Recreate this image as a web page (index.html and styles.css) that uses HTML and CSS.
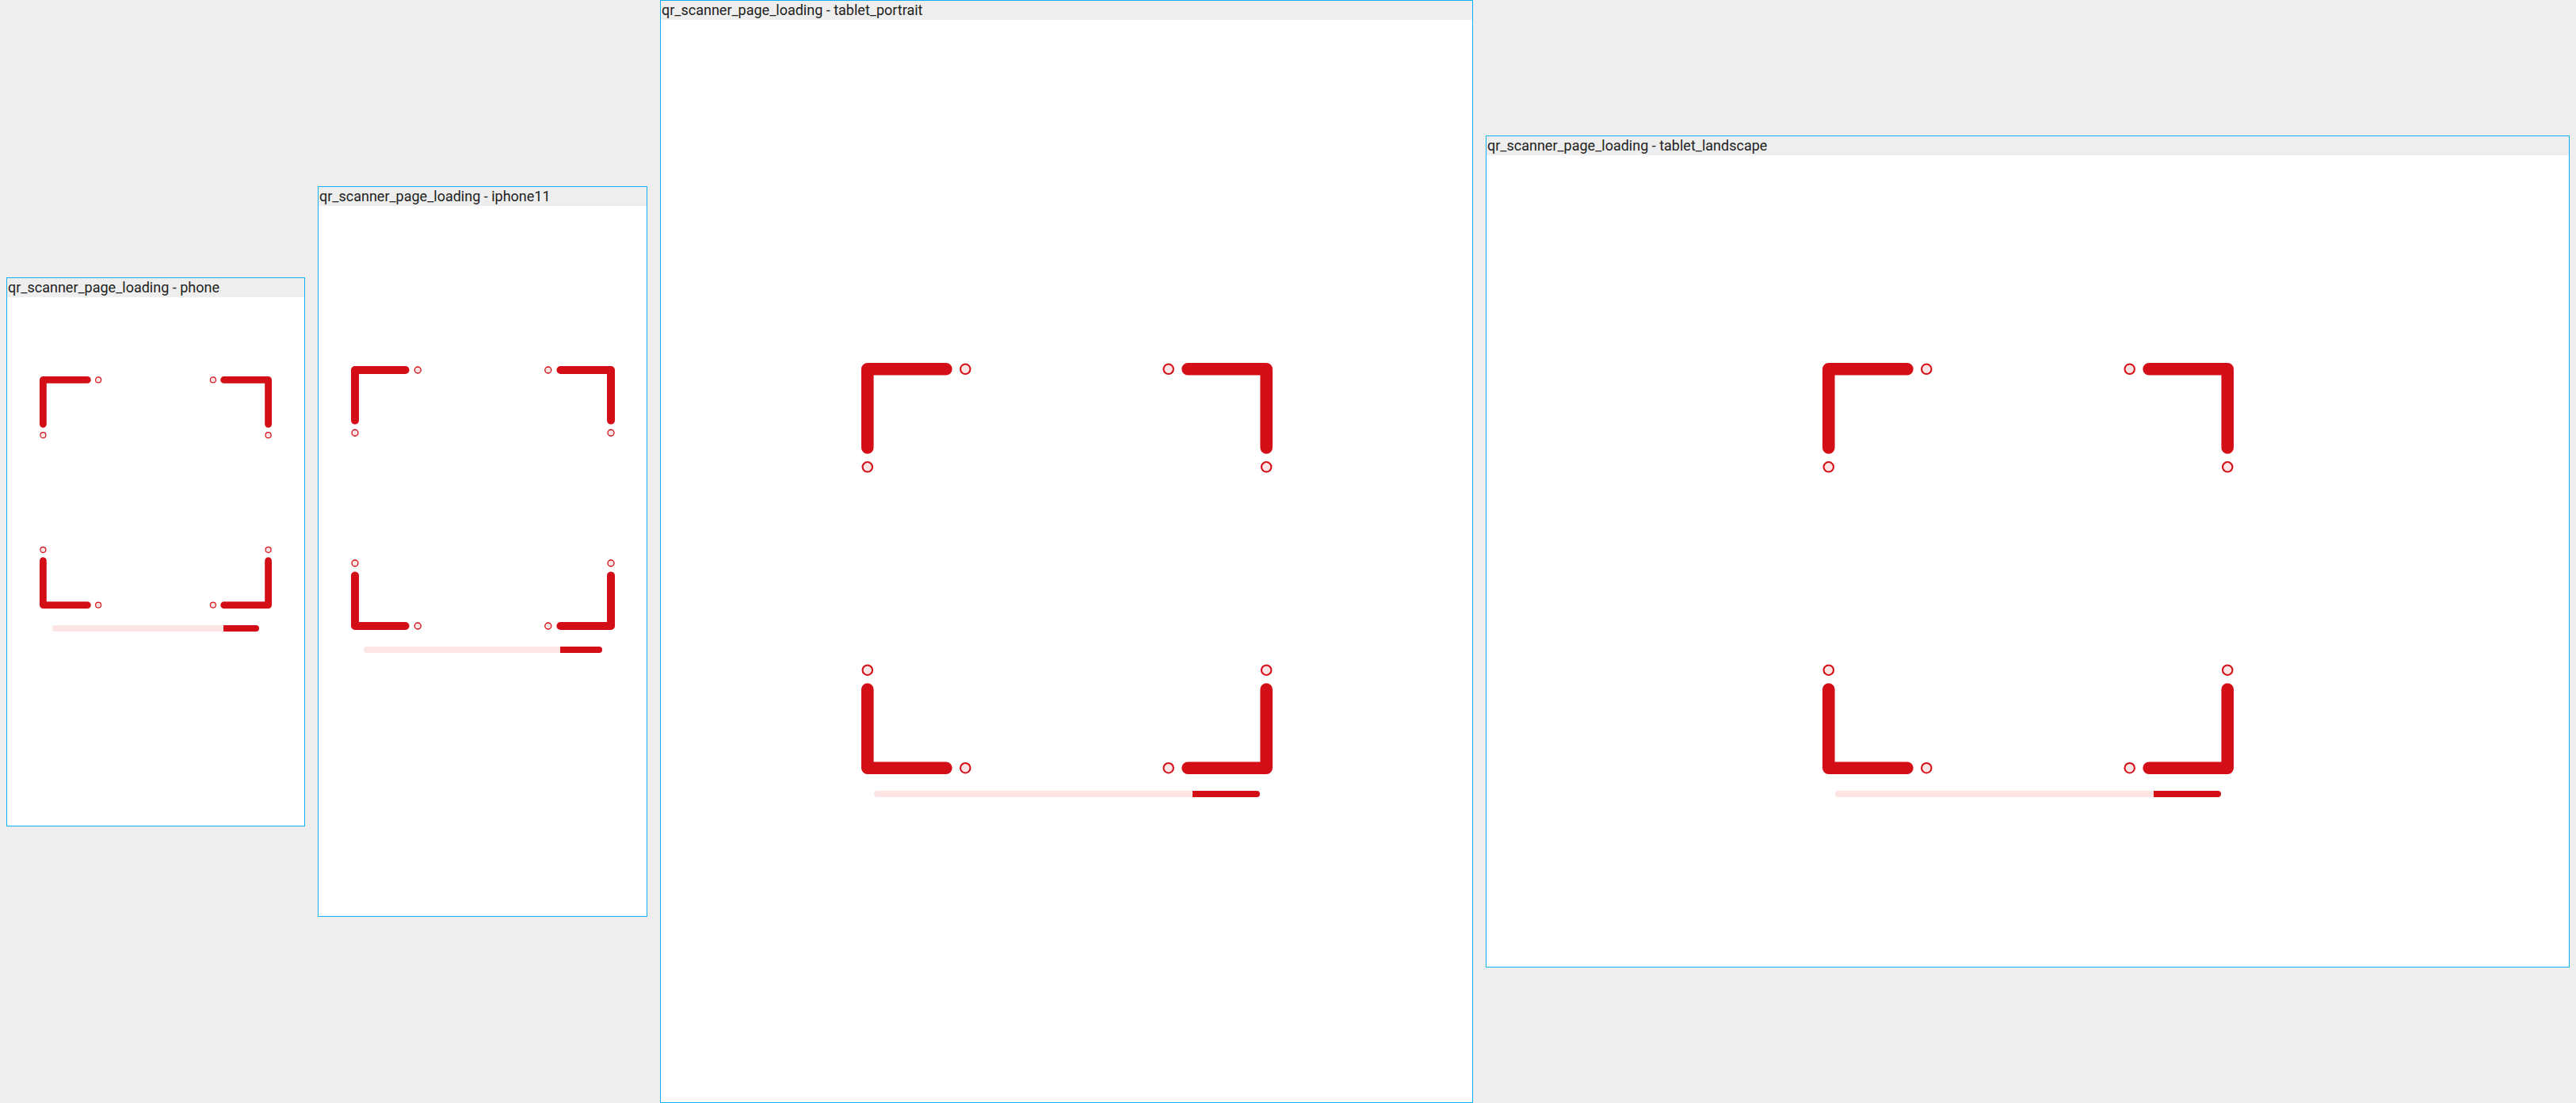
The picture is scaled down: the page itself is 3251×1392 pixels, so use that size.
FILE: index.html
```html
<!DOCTYPE html>
<html lang="en">
<head>
<meta charset="utf-8">
<title>qr_scanner_page_loading</title>
<link rel="stylesheet" href="styles.css">
</head>
<body>
<div class="canvas">
  <div class="frame">
    <div class="frame-title">qr_scanner_page_loading - phone</div>
    <div class="device device-phone">
      <div class="scanner scanner-phone">
        <svg class="finder" viewBox="0 0 100 100">
          <g class="corner"><path d="M1.5 20.6V1.5H20.6"/><path d="M79.4 1.5H98.5V20.6"/><path d="M1.5 79.4V98.5H20.6"/><path d="M79.4 98.5H98.5V79.4"/></g>
          <g class="dot"><circle cx="25.3" cy="1.5" r="1.2"/><circle cx="1.5" cy="25.3" r="1.2"/><circle cx="74.7" cy="1.5" r="1.2"/><circle cx="98.5" cy="25.3" r="1.2"/><circle cx="1.5" cy="74.7" r="1.2"/><circle cx="25.3" cy="98.5" r="1.2"/><circle cx="74.7" cy="98.5" r="1.2"/><circle cx="98.5" cy="74.7" r="1.2"/></g>
        </svg>
        <div class="progress"><div class="progress-fill"></div></div>
      </div>
    </div>
  </div>
  <div class="frame">
    <div class="frame-title">qr_scanner_page_loading - iphone11</div>
    <div class="device device-iphone">
      <div class="scanner scanner-iphone">
        <svg class="finder" viewBox="0 0 100 100">
          <g class="corner"><path d="M1.5 20.6V1.5H20.6"/><path d="M79.4 1.5H98.5V20.6"/><path d="M1.5 79.4V98.5H20.6"/><path d="M79.4 98.5H98.5V79.4"/></g>
          <g class="dot"><circle cx="25.3" cy="1.5" r="1.2"/><circle cx="1.5" cy="25.3" r="1.2"/><circle cx="74.7" cy="1.5" r="1.2"/><circle cx="98.5" cy="25.3" r="1.2"/><circle cx="1.5" cy="74.7" r="1.2"/><circle cx="25.3" cy="98.5" r="1.2"/><circle cx="74.7" cy="98.5" r="1.2"/><circle cx="98.5" cy="74.7" r="1.2"/></g>
        </svg>
        <div class="progress"><div class="progress-fill"></div></div>
      </div>
    </div>
  </div>
  <div class="frame">
    <div class="frame-title">qr_scanner_page_loading - tablet_portrait</div>
    <div class="device device-portrait">
      <div class="scanner scanner-tablet">
        <svg class="finder" viewBox="0 0 100 100">
          <g class="corner"><path d="M1.5 20.6V1.5H20.6"/><path d="M79.4 1.5H98.5V20.6"/><path d="M1.5 79.4V98.5H20.6"/><path d="M79.4 98.5H98.5V79.4"/></g>
          <g class="dot"><circle cx="25.3" cy="1.5" r="1.2"/><circle cx="1.5" cy="25.3" r="1.2"/><circle cx="74.7" cy="1.5" r="1.2"/><circle cx="98.5" cy="25.3" r="1.2"/><circle cx="1.5" cy="74.7" r="1.2"/><circle cx="25.3" cy="98.5" r="1.2"/><circle cx="74.7" cy="98.5" r="1.2"/><circle cx="98.5" cy="74.7" r="1.2"/></g>
        </svg>
        <div class="progress"><div class="progress-fill"></div></div>
      </div>
    </div>
  </div>
  <div class="frame">
    <div class="frame-title">qr_scanner_page_loading - tablet_landscape</div>
    <div class="device device-landscape">
      <div class="scanner scanner-tablet">
        <svg class="finder" viewBox="0 0 100 100">
          <g class="corner"><path d="M1.5 20.6V1.5H20.6"/><path d="M79.4 1.5H98.5V20.6"/><path d="M1.5 79.4V98.5H20.6"/><path d="M79.4 98.5H98.5V79.4"/></g>
          <g class="dot"><circle cx="25.3" cy="1.5" r="1.2"/><circle cx="1.5" cy="25.3" r="1.2"/><circle cx="74.7" cy="1.5" r="1.2"/><circle cx="98.5" cy="25.3" r="1.2"/><circle cx="1.5" cy="74.7" r="1.2"/><circle cx="25.3" cy="98.5" r="1.2"/><circle cx="74.7" cy="98.5" r="1.2"/><circle cx="98.5" cy="74.7" r="1.2"/></g>
        </svg>
        <div class="progress"><div class="progress-fill"></div></div>
      </div>
    </div>
  </div>
</div>
</body>
</html>
```

FILE: styles.css
```css
html, body {
  margin: 0;
  padding: 0;
  background: #eeeeee;
  font-family: Roboto, "Liberation Sans", sans-serif;
}

.canvas {
  display: flex;
  align-items: center;
  gap: 16px;
  padding: 0 8px;
  height: 1392px;
  box-sizing: border-box;
}

.frame {
  flex: none;
  border: 1px solid #0fb0f0;
  background: #ffffff;
}

.frame-title {
  height: 24px;
  line-height: 24px;
  padding-left: 1px;
  background: #eeeeee;
  color: #212121;
  font-size: 18px;
  white-space: nowrap;
  overflow: hidden;
}

.device {
  display: flex;
  flex-direction: column;
  align-items: center;
  box-sizing: border-box;
  background: #ffffff;
}

.device-phone { width: 375px; height: 667px; padding-top: 100px; }
.device-iphone { width: 414px; height: 896px; padding-top: 202px; }
.device-portrait { width: 1024px; height: 1366px; padding-top: 433px; }
.device-landscape { width: 1366px; height: 1024px; padding-top: 262px; }

.scanner {
  display: flex;
  flex-direction: column;
  align-items: center;
  gap: 21px;
}
.scanner-phone { width: 293px; }
.scanner-iphone { width: 333px; }
.scanner-tablet { width: 519px; }

.finder {
  display: block;
  width: 100%;
  aspect-ratio: 1 / 1;
  overflow: visible;
}

.corner path {
  fill: none;
  stroke: #d40e16;
  stroke-width: 3;
  stroke-linecap: round;
  stroke-linejoin: round;
}

.dot circle {
  fill: #fde4e5;
  stroke: #d40e16;
  stroke-width: 0.4;
}

.progress {
  align-self: stretch;
  margin: 0 16px;
  height: 8px;
  border-radius: 4px;
  background: #fde4e5;
  overflow: hidden;
  display: flex;
  justify-content: flex-end;
}

.progress-fill {
  width: 17.3%;
  background: #d40e16;
}
```
